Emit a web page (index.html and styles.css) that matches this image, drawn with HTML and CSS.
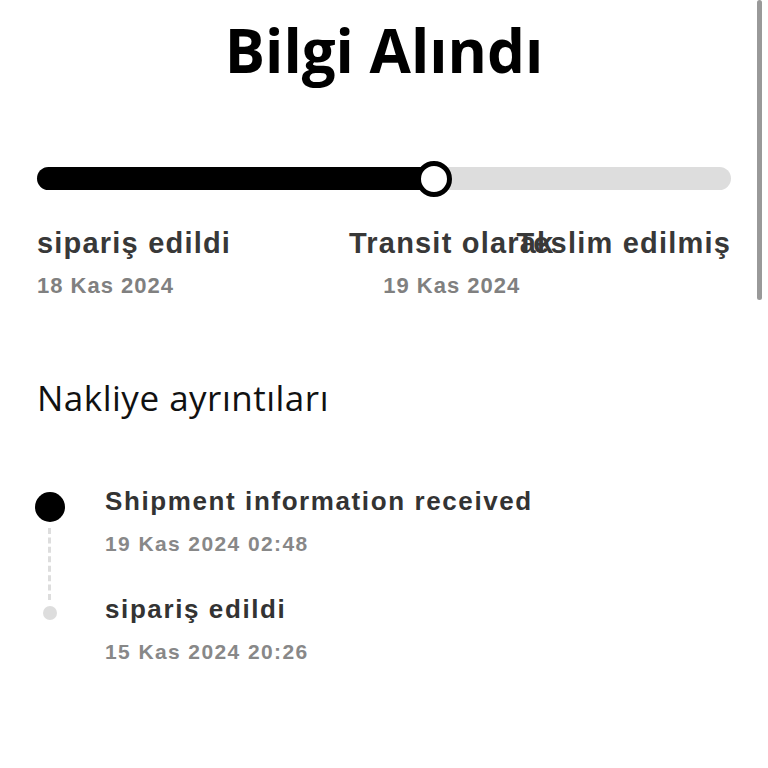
FILE: index.html
```html
<!DOCTYPE html>
<html lang="tr">
<head>
  <meta charset="UTF-8" />
  <title>Bilgi Alındı</title>
  <link rel="stylesheet" href="styles.css">
</head>
<body>
  <h1 class="title">Bilgi Alındı</h1>

  <div class="progress">
    <div class="track">
      <div class="fill" style="width: 57%;"></div>
      <div class="knob"></div>
    </div>
  </div>

  <div class="steps">
    <div class="step step-first">
      <div class="step-name">sipariş edildi</div>
      <div class="step-date">18 Kas 2024</div>
    </div>
    <div class="step step-mid">
      <div class="step-name">Transit olarak</div>
      <div class="step-date">19 Kas 2024</div>
    </div>
    <div class="step step-last">
      <div class="step-name">Teslim edilmiş</div>
    </div>
  </div>

  <h2 class="section">Nakliye ayrıntıları</h2>

  <ul class="timeline">
    <li class="event current">
      <span class="dot"></span>
      <div class="event-name">Shipment information received</div>
      <div class="event-date">19 Kas 2024 02:48</div>
    </li>
    <li class="event">
      <span class="dot"></span>
      <div class="event-name">sipariş edildi</div>
      <div class="event-date">15 Kas 2024 20:26</div>
    </li>
  </ul>

  <div class="scroll-thumb"></div>
</body>
</html>
```

FILE: styles.css
```css
body {
  margin: 0;
  padding: 0 37px;
  background: #fff;
  font-family: "Liberation Sans", Arial, sans-serif;
  color: #333;
}
.title {
  margin: 0;
  padding-top: 12px;
  text-align: center;
  font-family: "Open Sans", sans-serif;
  font-weight: 700;
  font-size: 60px;
  line-height: 76px;
  color: #000;
}
.progress {
  margin-top: 79px;
}
.track {
  display: flex;
  align-items: center;
  height: 23px;
  border-radius: 12px;
  background: #ddd;
}
.fill {
  height: 23px;
  border-radius: 12px;
  background: #000;
}
.knob {
  width: 26px;
  height: 26px;
  margin-left: -17px;
  border: 5px solid #000;
  border-radius: 50%;
  background: #fff;
}
.steps {
  display: grid;
  margin-top: 37px;
}
/* all three labels share one cell; the long ones run into each other */
.step {
  grid-area: 1 / 1;
}
.step-mid {
  justify-self: start;
  margin-left: 312px;
  text-align: center;
}
.step-last {
  justify-self: end;
}
.step-name {
  font-weight: 700;
  font-size: 29px;
  line-height: 32px;
  letter-spacing: 1.2px;
  color: #383838;
}
.step-date {
  margin-top: 14px;
  font-weight: 700;
  font-size: 22px;
  line-height: 26px;
  letter-spacing: 1px;
  color: #808080;
}
.section {
  margin: 77px 0 0;
  font-family: "Open Sans", sans-serif;
  font-weight: 400;
  font-size: 35px;
  line-height: 44px;
  letter-spacing: 0.5px;
  color: #111;
}
.timeline {
  list-style: none;
  margin: 66px 0 0;
  padding: 0;
}
.event {
  position: relative;
  padding-left: 68px;
  padding-bottom: 37px;
}
.event-name {
  font-weight: 700;
  font-size: 26px;
  line-height: 30px;
  letter-spacing: 1.6px;
  color: #333;
}
.event-date {
  margin-top: 15px;
  font-weight: 700;
  font-size: 21px;
  line-height: 26px;
  letter-spacing: 1.4px;
  color: #888;
}
.dot {
  position: absolute;
  left: 6px;
  top: 12px;
  width: 14px;
  height: 14px;
  border-radius: 50%;
  background: #ddd;
}
.current .dot {
  left: -2px;
  top: 6px;
  width: 30px;
  height: 30px;
  background: #000;
}
.current::before {
  content: "";
  position: absolute;
  left: 11px;
  top: 42px;
  height: 72px;
  border-left: 3px dashed #ddd;
}
.scroll-thumb {
  position: fixed;
  top: 0;
  right: 6px;
  width: 5px;
  height: 300px;
  border-radius: 3px;
  background: #999;
}
```
